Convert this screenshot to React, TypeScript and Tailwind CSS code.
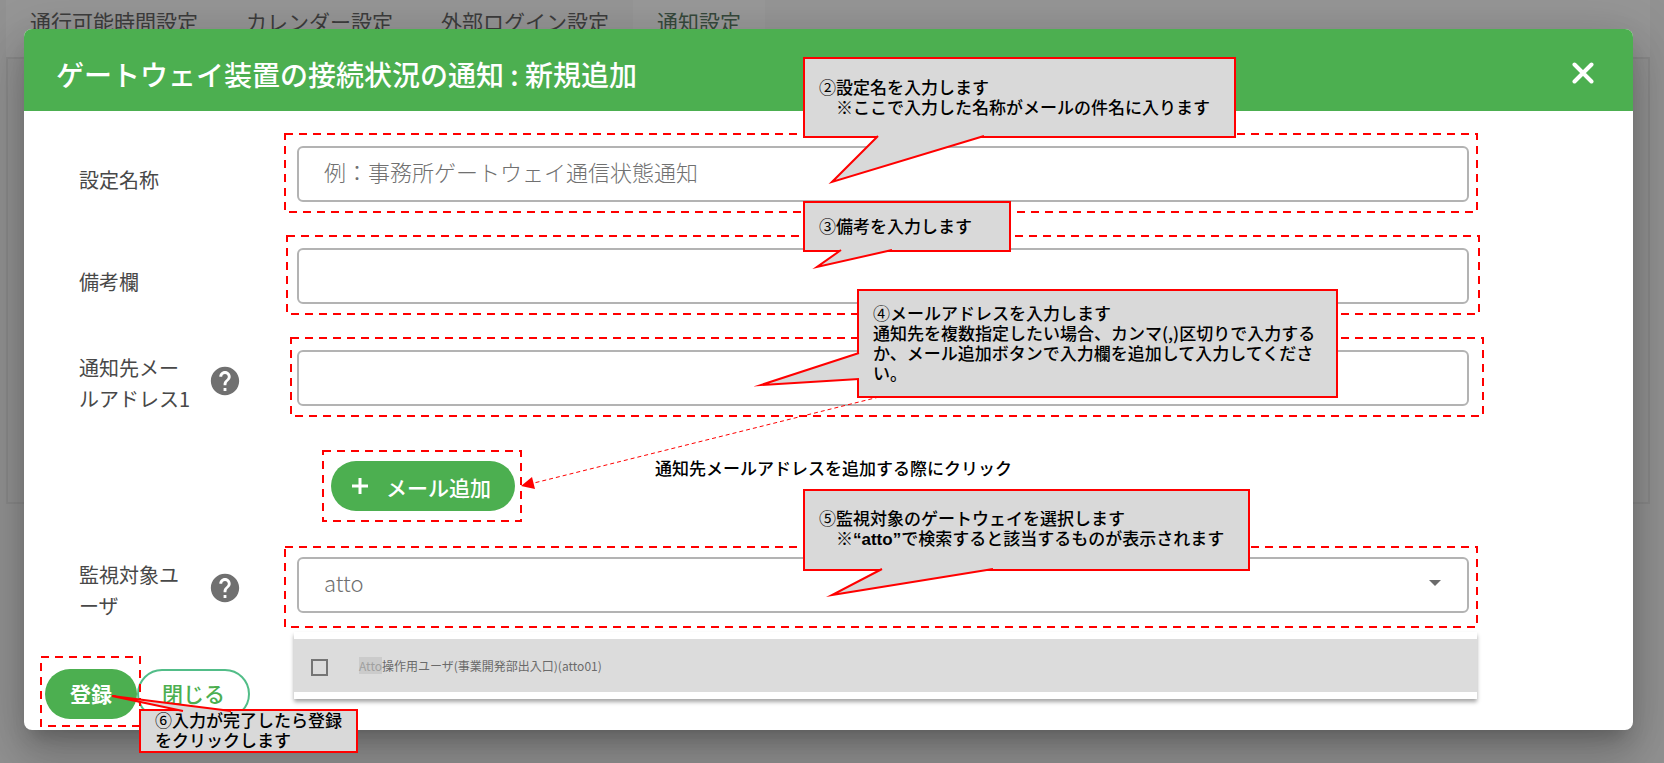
import type { ReactNode } from "react";

const TABS = ["通行可能時間設定", "カレンダー設定", "外部ログイン設定", "通知設定"];

function DashFrame({ className }: { className: string }) {
  return (
    <span aria-hidden="true" className={`pointer-events-none absolute ${className}`}>
      <svg className="block h-full w-full overflow-visible">
        <rect width="100%" height="100%" fill="none" stroke="#ff0000" strokeWidth="2" strokeDasharray="8 6" shapeRendering="crispEdges" />
      </svg>
    </span>
  );
}

function Callout({ className, tail, children }: { className: string; tail: string; children: ReactNode }) {
  return (
    <div
      className={`absolute z-20 flex items-center whitespace-nowrap border-2 border-[#ff0000] bg-[#d9d9d9] px-3.5 pb-0.5 text-[17px] leading-5 font-medium text-black ${className}`}
    >
      <svg aria-hidden="true" className="pointer-events-none absolute top-0 left-0 h-px w-px overflow-visible">
        <polyline points={tail} fill="#d9d9d9" stroke="#ff0000" strokeWidth="2" strokeMiterlimit="10" />
      </svg>
      <div className="relative">{children}</div>
    </div>
  );
}

function HelpIcon({ label }: { label: string }) {
  return (
    <button type="button" aria-label={label} className="mt-1 h-8 w-8">
      <svg viewBox="0 0 24 24" className="-ml-[3px] h-[34px] w-[34px] fill-[#707070]">
        <path d="M12 2C6.48 2 2 6.48 2 12s4.48 10 10 10 10-4.48 10-10S17.52 2 12 2zm1 17h-2v-2h2v2zm2.07-7.75-.9.92C13.45 12.9 13 13.5 13 15h-2v-.5c0-1.1.45-2.1 1.17-2.83l1.24-1.26c.37-.36.59-.86.59-1.41 0-1.1-.9-2-2-2s-2 .9-2 2H8c0-2.21 1.79-4 4-4s4 1.79 4 4c0 .88-.36 1.68-.93 2.25z" />
      </svg>
    </button>
  );
}

function Field({ id, label, help, children }: { id: string; label: string; help?: string; children: ReactNode }) {
  return (
    <div className="flex h-14 items-center">
      <div className="w-[132px] shrink-0 pt-2.5">
        <label htmlFor={id} className="block w-28 text-xl leading-[31px] break-all text-[#484848]">
          {label}
        </label>
      </div>
      <div className="flex w-[86px] shrink-0 items-center">{help && <HelpIcon label={help} />}</div>
      <div className="relative min-w-0 flex-1">{children}</div>
    </div>
  );
}

const INPUT =
  "block h-14 w-full rounded-md border-2 border-[#b3b3b3] bg-white px-[25px] pb-1.5 text-[22px] font-light text-[#707070] outline-none placeholder:text-[#707070]";

export default function App() {
  return (
    <div className="relative min-h-screen overflow-hidden bg-[#f4f4f4] font-['Noto_Sans_CJK_JP',sans-serif]">
      <div className="pr-3.5 pl-1.5">
        <nav className="flex h-[57px] bg-[#fafafa] text-[21px] text-[#666]">
          {TABS.map((tab, i) => (
            <a
              key={tab}
              href="#"
              className={i === 3 ? "bg-white px-6 pt-1.5 text-[#5b7a64]" : "px-6 pt-1.5"}
            >
              {tab}
            </a>
          ))}
        </nav>
        <div className="h-[447px] border-2 border-[#e6e6e6]" />
      </div>

      <div className="absolute inset-0 bg-black/40 pt-[29px] pr-[31px] pl-6">
        <section
          role="dialog"
          aria-labelledby="dialog-title"
          className="relative rounded-lg bg-white shadow-[0_13px_18px_-8px_rgba(0,0,0,0.2),0_28px_44px_4px_rgba(0,0,0,0.14),0_10px_54px_9px_rgba(0,0,0,0.12)]"
        >
          <header className="flex h-[82px] items-center justify-between rounded-t-lg bg-[#4caf50] pr-[39px] pl-8 text-white">
            <h1 id="dialog-title" className="pt-2 text-[28px] font-medium">
              ゲートウェイ装置の接続状況の通知 : 新規追加
            </h1>
            <button type="button" aria-label="閉じる" className="pt-1.5">
              <svg viewBox="0 0 22 22" className="h-[22px] w-[22px]" stroke="currentColor" strokeWidth="4" strokeLinecap="round">
                <path d="M2.500 2.500 19.500 19.500M19.500 2.500 2.500 19.500" />
              </svg>
            </button>
          </header>

          <form className="pt-[35px]" onSubmit={(e) => e.preventDefault()}>
            <div className="flex flex-col gap-[46px] pr-[164px] pl-[55px]">
              <Field id="name" label="設定名称">
                <input id="name" type="text" placeholder="例：事務所ゲートウェイ通信状態通知" className={INPUT} />
                <DashFrame className="-top-3 -right-2 -bottom-2.5 -left-3" />
              </Field>
              <Field id="note" label="備考欄">
                <input id="note" type="text" className={INPUT} />
                <DashFrame className="-top-3 -right-2.5 -bottom-2.5 -left-2.5" />
              </Field>
              <Field id="mail" label="通知先メールアドレス1" help="通知先メールアドレスのヘルプ">
                <input id="mail" type="email" multiple className={INPUT} />
                <DashFrame className="-top-3 -right-3.5 -bottom-2.5 -left-1.5" />
              </Field>

              <div className="mt-[9px] flex pl-[252px]">
                <div className="relative">
                  <button
                    type="button"
                    className="flex h-[50px] items-center gap-[18px] rounded-full bg-[#4caf50] pr-6 pl-[21px] text-[21px] font-medium text-white"
                  >
                    <svg viewBox="0 0 16 16" className="h-4 w-4" stroke="currentColor" strokeWidth="3">
                      <path d="M8 0V16M0 8H16" />
                    </svg>
                    <span className="pt-1">メール追加</span>
                  </button>
                  <DashFrame className="-top-2.5 -right-1.5 -bottom-2.5 -left-2" />
                </div>
              </div>

              <Field id="target" label="監視対象ユーザ" help="監視対象ユーザのヘルプ">
                <input
                  id="target"
                  type="text"
                  role="combobox"
                  aria-expanded="true"
                  aria-controls="target-options"
                  defaultValue="atto"
                  className={INPUT}
                />
                <svg
                  aria-hidden="true"
                  viewBox="0 0 12 6"
                  className="pointer-events-none absolute top-[23px] right-7 h-1.5 w-3 fill-[#6b6b6b]"
                >
                  <path d="M0 0H12L6 6Z" />
                </svg>
                <DashFrame className="-top-2.5 -right-2 -bottom-3.5 -left-3" />
                <div
                  id="target-options"
                  className="absolute top-full -right-2 -left-[3px] mt-[19px] bg-white py-[7px] shadow-[0_3px_4px_0_rgba(0,0,0,0.35)]"
                >
                  <label className="flex h-[53px] items-center bg-[#dcdcdc] pl-[17px] text-xs text-[#6a6a6a]">
                    <input type="checkbox" className="mt-1 h-[17px] w-[17px] appearance-none border-2 border-[#757575]" />
                    <span className="pl-[31px]">
                      <span className="bg-[#cbcbcb] text-[#a0a0a0]">Atto</span>
                      操作用ユーザ(事業開発部出入口)(atto01)
                    </span>
                  </label>
                </div>
              </Field>
            </div>

            <footer className="mt-14 flex pb-[11px] pl-[21px] text-[21px]">
              <div className="relative">
                <button type="submit" className="h-[50px] w-[92px] rounded-full bg-[#4caf50] font-bold text-white">
                  登録
                </button>
                <DashFrame className="-top-3 -right-[3px] -bottom-[7px] -left-1" />
              </div>
              <button type="button" className="h-[50px] w-[113px] rounded-full border-2 border-[#52bd88] font-medium text-[#4caf50]">
                閉じる
              </button>
            </footer>
          </form>

          <svg aria-hidden="true" className="pointer-events-none absolute top-0 left-0 h-px w-px overflow-visible">
            <path d="M855 368 510 454" stroke="#ff0000" strokeWidth="1" strokeDasharray="4 3" />
            <path d="M497 457 508 448 511 460Z" fill="#ff0000" />
          </svg>
          <p className="absolute top-[429px] left-[631px] text-[17px] leading-5 font-medium whitespace-nowrap text-black">
            通知先メールアドレスを追加する際にクリック
          </p>

          <Callout className="top-7 left-[779px] h-[81px] w-[433px]" tail="73,77 27,123 179,77">
            <p>
              <span className="font-normal">②</span>設定名を入力します
            </p>
            <p className="pl-[17px]">
              <span className="font-normal">※</span>ここで入力した名称がメールの件名に入ります
            </p>
          </Callout>
          <Callout className="top-[172px] left-[779px] h-[51px] w-[208px]" tail="36,47 12,64 87,47">
            <p>
              <span className="font-normal">③</span>備考を入力します
            </p>
          </Callout>
          <Callout className="top-[260px] left-[833px] h-[109px] w-[481px]" tail="0,62 -98,94 0,88">
            <p>
              <span className="font-normal">④</span>メールアドレスを入力します
            </p>
            <p>
              通知先を複数指定したい場合、カンマ(,)区切りで入力する
              <br />
              か、メール追加ボタンで入力欄を追加して入力してくださ
              <br />
              い。
            </p>
          </Callout>
          <Callout className="top-[460px] left-[779px] h-[82px] w-[447px]" tail="77,78 27,104 188,78">
            <p>
              <span className="font-normal">⑤</span>監視対象のゲートウェイを選択します
            </p>
            <p className="pl-[17px]">
              <span className="font-normal">※</span>
              <span className="font-['Liberation_Sans',sans-serif] font-bold">“atto”</span>
              で検索すると該当するものが表示されます
            </p>
          </Callout>
          <Callout className="top-[680px] left-[115px] h-11 w-[219px]" tail="42,0 -29,-15 90,0">
            <p>
              <span className="font-normal">⑥</span>入力が完了したら登録
            </p>
            <p>をクリックします</p>
          </Callout>
        </section>
      </div>
    </div>
  );
}
